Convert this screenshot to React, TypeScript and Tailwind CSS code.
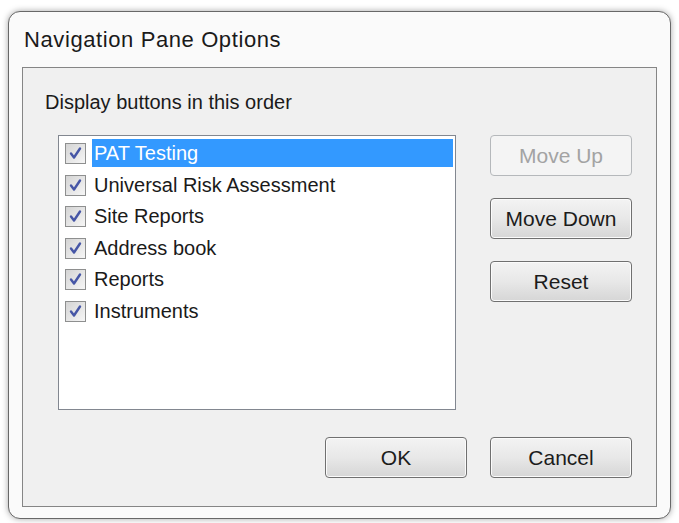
import React from 'react';

const items = [
    'PAT Testing',
    'Universal Risk Assessment',
    'Site Reports',
    'Address book',
    'Reports',
    'Instruments',
];

function CheckBox() {
    return (
        <span className="w-[21px] h-[21px] shrink-0 border border-[#8e8f8f] bg-gradient-to-br from-[#d4d4d4] to-[#f6f6f6] flex items-center justify-center">
            <svg width="15" height="15" viewBox="0 0 15 15">
                <path d="M3 7.5 L6 11.5 L12 2.5" fill="none" stroke="#4656a6" strokeWidth="2.4" strokeLinecap="round" strokeLinejoin="round" />
            </svg>
        </span>
    );
}

function Button({ label, disabled }: { label: string; disabled?: boolean }) {
    return (
        <button
            type="button"
            className={
                disabled
                    ? 'w-[142px] h-[41px] rounded-[4px] border border-[#b5b8bb] bg-[#f4f4f4] text-[#a3a3a3] text-[21px]'
                    : 'w-[142px] h-[41px] rounded-[4px] border border-[#707070] bg-gradient-to-b from-[#f3f3f3] via-[#e8e8e8] to-[#d6d6d6] text-[#1c1c1c] text-[21px] shadow-[inset_0_0_0_1px_#fbfbfb]'
            }
        >
            {label}
        </button>
    );
}

export default function App() {
    return (
        <div className="w-[679px] h-[523px] bg-white pt-[11px] pl-[8px] font-['Liberation_Sans',Arial,sans-serif]">
            <div className="w-[663px] h-[508px] rounded-[12px] border border-[#686868] bg-[#fafafa] shadow-[0_0_6px_rgba(0,0,0,0.35)] flex flex-col px-[13px] pb-[11px]">
                <div className="h-[55px] pt-[15px] text-[22px] leading-[26px] tracking-[0.6px] text-[#1a1a1a] pl-[2px]">
                    Navigation Pane Options
                </div>
                <div className="flex-1 border border-[#858585] bg-[#f0f0f0] flex flex-col">
                    <div className="pt-[23px] pl-[22px] text-[20px] leading-[22px] text-[#1a1a1a]">
                        Display buttons in this order
                    </div>
                    <div className="flex mt-[22px] pl-[35px]">
                        <div className="w-[398px] h-[275px] border border-[#828790] bg-white pt-[7px] pl-[6px] pr-[2px]">
                            {items.map((item, i) => (
                                <div key={item} className="h-[31.6px] flex items-start">
                                    <CheckBox />
                                    <span
                                        className={
                                            i === 0
                                                ? 'ml-[6px] flex-1 h-[28px] -mt-[4px] pl-[2px] bg-[#3399ff] text-white text-[20px] leading-[28px]'
                                                : 'ml-[6px] flex-1 h-[28px] -mt-[4px] pl-[2px] text-[#1a1a1a] text-[20px] leading-[28px]'
                                        }
                                    >
                                        {item}
                                    </span>
                                </div>
                            ))}
                        </div>
                        <div className="ml-[34px] flex flex-col gap-[22px]">
                            <Button label="Move Up" disabled />
                            <Button label="Move Down" />
                            <Button label="Reset" />
                        </div>
                    </div>
                    <div className="flex justify-end gap-[23px] mt-[27px] pr-[24px]">
                        <Button label="OK" />
                        <Button label="Cancel" />
                    </div>
                </div>
            </div>
        </div>
    );
}
